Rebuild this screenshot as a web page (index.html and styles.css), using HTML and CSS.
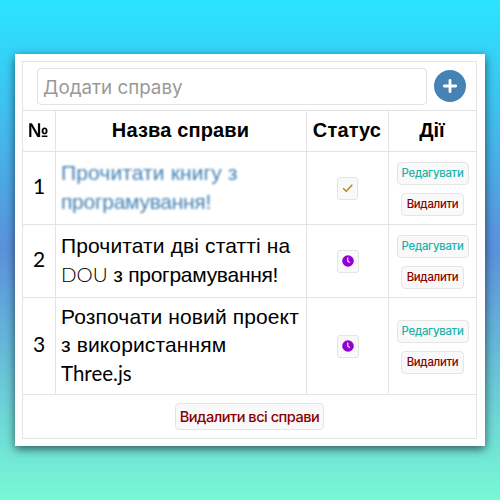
FILE: index.html
```
<!DOCTYPE html>
<html lang="uk">
<head>
<meta charset="utf-8">
<title>Список справ</title>
<link rel="stylesheet" href="styles.css">
</head>
<body>
<main class="card">
  <table class="todo">
    <colgroup><col class="c-num"><col class="c-name"><col class="c-status"><col class="c-actions"></colgroup>
    <thead>
      <tr class="r-form"><td colspan="4">
        <div class="form">
          <div class="field"><span>Додати справу</span></div>
          <button class="add" aria-label="Додати"><svg width="32" height="32" viewBox="0 0 32 32"><path d="M16 10.3v11.4M10.3 16h11.4" stroke="#fff" stroke-width="2.8" stroke-linecap="round"/></svg></button>
        </div>
      </td></tr>
      <tr class="r-head"><th><span class="h-num">№</span></th><th class="h-name">Назва справи</th><th class="h-status">Статус</th><th>Дії</th></tr>
    </thead>
    <tbody>
      <tr class="r-two">
        <td class="num">1</td>
        <td class="name"><div class="done"><span class="wide">Прочитати книгу з</span><span class="tight">програмування!</span></div></td>
        <td><button class="state check"><svg width="12" height="12" viewBox="0 0 12 12"><path d="M1.2 6.3 4.2 9.2 10.3 2.8" fill="none" stroke="#b8860b" stroke-width="1.4"/></svg></button></td>
        <td><div class="actions"><button class="btn edit">Редагувати</button><button class="btn del">Видалити</button></div></td>
      </tr>
      <tr class="r-two">
        <td class="num">2</td>
        <td class="name"><div><span class="wide">Прочитати дві статті на</span><span class="tight"><span class="latin light">DOU</span> з програмування!</span></div></td>
        <td><button class="state"><svg width="12" height="12" viewBox="0 0 12 12"><circle cx="6" cy="6" r="5.8" fill="#9400d3"/><path d="M5.8 2.6V6.2L7.9 7.6" fill="none" stroke="#fff" stroke-width="1.1"/></svg></button></td>
        <td><div class="actions"><button class="btn edit">Редагувати</button><button class="btn del">Видалити</button></div></td>
      </tr>
      <tr class="r-three">
        <td class="num">3</td>
        <td class="name"><div><span class="wide">Розпочати новий проект</span><span class="wide">з використанням</span><span class="tight"><span class="latin">Three.js</span></span></div></td>
        <td><button class="state"><svg width="12" height="12" viewBox="0 0 12 12"><circle cx="6" cy="6" r="5.8" fill="#9400d3"/><path d="M5.8 2.6V6.2L7.9 7.6" fill="none" stroke="#fff" stroke-width="1.1"/></svg></button></td>
        <td><div class="actions"><button class="btn edit">Редагувати</button><button class="btn del">Видалити</button></div></td>
      </tr>
    </tbody>
    <tfoot>
      <tr class="r-foot"><td colspan="4"><button class="btn clear">Видалити всі справи</button></td></tr>
    </tfoot>
  </table>
</main>
</body>
</html>
```
FILE: styles.css
```
* { box-sizing: border-box; }
body {
  margin: 0;
  height: 500px;
  padding: 54px 15px;
  overflow: hidden;
  background: linear-gradient(#2ae5ff, #5b91dc 50%, #77f9d4);
  font-family: "Liberation Sans", Arial, sans-serif;
  color: #000;
}
.card {
  width: 470px;
  height: 392px;
  padding: 7px;
  background: #fff;
  box-shadow: 0 3px 9px rgba(0, 0, 0, .6);
}
.todo {
  width: 455px;
  height: 378px;
  table-layout: fixed;
  border-collapse: collapse;
  text-align: center;
}
.c-num { width: 33px; }
.c-name { width: 251px; }
.c-status { width: 82px; }
.c-actions { width: 88px; }
td, th {
  padding: 0;
  border: 1px solid #e4e4e4;
  vertical-align: middle;
  white-space: nowrap;
}
.r-form { height: 49px; }
.r-head { height: 41px; }
.r-two { height: 73px; }
.r-three { height: 97px; }
.r-foot { height: 44px; }
button {
  margin: 0;
  padding: 0;
  border: 1px solid #e5e5e5;
  background: #f9f9f9;
  font-family: Inter, sans-serif;
}
.form {
  display: flex;
  align-items: center;
  gap: 7px;
  padding-left: 14px;
}
.field {
  display: flex;
  align-items: center;
  width: 390px;
  height: 37px;
  padding: 2px 0 0 5px;
  border: 1px solid #e3e3e3;
  border-radius: 4px;
  color: #999;
  font: 18.8px Inter, sans-serif;
}
.add {
  width: 32px;
  height: 32px;
  border: 0;
  border-radius: 50%;
  background: #4682b4;
}
.add svg, .state svg { display: block; }
th {
  padding: 0 1px 2px 0;
  font-size: 20px;
  font-weight: 700;
}
.h-num { display: inline-block; transform: scaleX(.93); }
.h-name, .h-status { letter-spacing: .15px; }
.num {
  padding: 0 0 5px 0;
  font: 21px Lato, sans-serif;
}
.name {
  padding: 0 0 1px 5px;
  text-align: left;
  font-size: 21px;
  line-height: 28.5px;
}
.name > div > span { display: block; height: 28.5px; }
.wide { letter-spacing: .12px; }
.tight { letter-spacing: -.28px; }
.latin {
  font-family: Lato, sans-serif;
  font-size: 20.5px;
  letter-spacing: 0;
  line-height: 1;
}
.light { font-size: 20.5px; font-weight: 300; }
.done { color: #4682b4; filter: blur(1px); }
.state {
  display: inline-flex;
  align-items: center;
  justify-content: center;
  width: 22px;
  height: 23px;
  border-radius: 3px;
  vertical-align: middle;
}
.check { width: 21px; }
.actions {
  display: flex;
  flex-direction: column;
  align-items: center;
  gap: 8px;
  padding-top: 1px;
}
.btn {
  height: 23px;
  border-radius: 4px;
  font-size: 11.4px;
  font-weight: 500;
  letter-spacing: -.3px;
}
.edit { width: 72px; color: #20b2aa; }
.del { width: 63px; color: #8b0000; }
.clear {
  width: 149px;
  height: 27px;
  color: #8b0000;
  font-size: 14.6px;
  letter-spacing: -.5px;
  vertical-align: middle;
}
```
